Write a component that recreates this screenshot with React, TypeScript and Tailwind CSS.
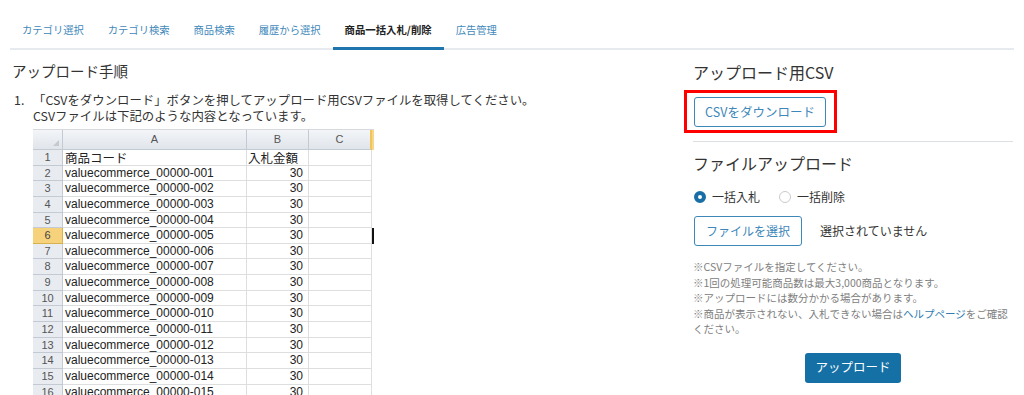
import React from 'react';

const tabs = [
  { label: 'カテゴリ選択', active: false },
  { label: 'カテゴリ検索', active: false },
  { label: '商品検索', active: false },
  { label: '履歴から選択', active: false },
  { label: '商品一括入札/削除', active: true },
  { label: '広告管理', active: false },
];

const rows = Array.from({ length: 16 }, (_, i) => i + 1);

const SheetPreview: React.FC = () => (
  <div className="ml-[21px] mt-[5px] w-[341px] border-t border-[#d6d9dd] font-['Liberation_Sans',sans-serif] text-[12px] text-[#222]">
    {/* column header */}
    <div className="flex h-[20px] bg-gradient-to-b from-[#f3f5f8] to-[#dfe4ea] text-[11px] text-[#555]">
      <div className="relative w-[30px] shrink-0 border-r border-b border-[#c3cad3]">
        <svg className="absolute bottom-[3px] right-[3px]" width="6" height="6" viewBox="0 0 6 6">
          <path d="M6 0 L6 6 L0 6 Z" fill="#c4c9cf" />
        </svg>
      </div>
      <div className="flex w-[184px] shrink-0 items-center justify-center border-r border-b border-[#c3cad3]">A</div>
      <div className="flex w-[62px] shrink-0 items-center justify-center border-r border-b border-[#c3cad3]">B</div>
      <div className="flex w-[63px] shrink-0 items-center justify-center border-r-2 border-b border-r-[#f0c55a] border-b-[#c3cad3]">C</div>
      <div className="flex-1 bg-[#f7d68a]" />
    </div>
    {rows.map((n) => (
      <div key={n} className="flex h-[15.65px] leading-[15px]">
        <div
          className={
            n === 6
              ? 'w-[30px] shrink-0 border-r border-b border-[#d9b24c] bg-[#f7d27c] text-center text-[11px] text-[#444]'
              : 'w-[30px] shrink-0 border-r border-b border-[#c3cad3] bg-[#e8ecf1] text-center text-[11px] text-[#555]'
          }
        >
          {n}
        </div>
        <div className="w-[184px] shrink-0 overflow-hidden whitespace-nowrap border-r border-b border-[#dcdee0] pl-[2px]">
          {n === 1 ? (
            <span className="font-['Noto_Sans_CJK_JP',sans-serif] text-[12.5px]">商品コード</span>
          ) : (
            `valuecommerce_00000-${String(n - 1).padStart(3, '0')}`
          )}
        </div>
        <div className="w-[62px] shrink-0 whitespace-nowrap border-r border-b border-[#dcdee0] pr-[5px] text-right">
          {n === 1 ? (
            <span className="block pl-[1px] text-left font-['Noto_Sans_CJK_JP',sans-serif] text-[12.5px]">入札金額</span>
          ) : (
            '30'
          )}
        </div>
        <div className="w-[63px] shrink-0 border-r border-b border-[#dcdee0]" />
        <div className={n === 6 ? 'w-[2px] bg-[#111]' : 'w-[2px]'} />
      </div>
    ))}
  </div>
);

export default function App() {
  return (
    <div className="h-[395px] w-[1024px] overflow-hidden bg-white font-['Noto_Sans_CJK_JP',sans-serif] text-[#333]">
      {/* Tabs */}
      <nav className="mx-[10px] flex h-[50px] border-b-2 border-[#e7ebef]">
        {tabs.map((t) => (
          <div
            key={t.label}
            className={
              t.active
                ? '-mb-[2px] flex items-end border-b-[3px] border-[#1f75ad] px-[12px] pb-[9px] text-[10.4px] font-bold leading-[16px] text-[#222]'
                : '-mb-[2px] flex items-end border-b-[3px] border-transparent px-[12px] pb-[9px] text-[10.3px] leading-[16px] text-[#4189bb]'
            }
          >
            {t.label}
          </div>
        ))}
      </nav>

      <div className="flex">
        {/* Left: instructions */}
        <section className="flex-1 pl-[12px]">
          <h2 className="mt-[10px] text-[14.5px] leading-[22px] text-[#333]">アップロード手順</h2>
          <div className="mt-[10px] flex text-[12.4px] leading-[16px] text-[#333]">
            <span className="w-[21px] shrink-0 pl-[2px]">1.</span>
            <p>
              「CSVをダウンロード」ボタンを押してアップロード用CSVファイルを取得してください。
              <br />
              CSVファイルは下記のような内容となっています。
            </p>
          </div>
          <SheetPreview />
        </section>

        {/* Right: upload panel */}
        <aside className="mr-[11px] w-[320px] shrink-0">
          <h2 className="mt-[11px] text-[16px] leading-[22px] text-[#333]">アップロード用CSV</h2>
          <div className="-ml-[9px] mt-[7px] inline-block border-[3px] border-[#f00] pb-[3px] pl-[7px] pr-[8px] pt-[4px]">
            <button className="h-[30px] w-[132px] rounded-[3px] border border-[#3d87b9] text-[12.5px] text-[#3d87b9]">
              CSVをダウンロード
            </button>
          </div>
          <div className="mt-[8px] border-t border-[#dcdfe2]" />
          <h2 className="mt-[10px] text-[16px] leading-[22px] text-[#333]">ファイルアップロード</h2>

          <div className="mt-[14px] flex h-[18px] items-center text-[12px] text-[#333]">
            <span className="ml-[1px] h-[12px] w-[12px] rounded-full border-[4px] border-[#1a6ea6] bg-white" />
            <span className="ml-[6px]">一括入札</span>
            <span className="ml-[19px] h-[12px] w-[12px] rounded-full border border-[#c8cbce] bg-white" />
            <span className="ml-[6px]">一括削除</span>
          </div>

          <div className="mt-[10px] flex items-center">
            <button className="ml-[1px] h-[30px] w-[108px] rounded-[3px] border border-[#3d87b9] text-[12px] text-[#3d87b9]">
              ファイルを選択
            </button>
            <span className="ml-[18px] text-[12px] text-[#333]">選択されていません</span>
          </div>

          <div className="mt-[13px] text-[10.5px] leading-[15.5px] text-[#808080]">
            <p>※CSVファイルを指定してください。</p>
            <p>※1回の処理可能商品数は最大3,000商品となります。</p>
            <p>※アップロードには数分かかる場合があります。</p>
            <p>
              ※商品が表示されない、入札できない場合は<span className="text-[#2f7db3]">ヘルプページ</span>をご確認ください。
            </p>
          </div>

          <div className="mt-[16px] flex justify-center">
            <button className="h-[30px] w-[96px] rounded-[3px] bg-[#1570a6] text-[12.5px] text-white">
              アップロード
            </button>
          </div>
        </aside>
      </div>
    </div>
  );
}
